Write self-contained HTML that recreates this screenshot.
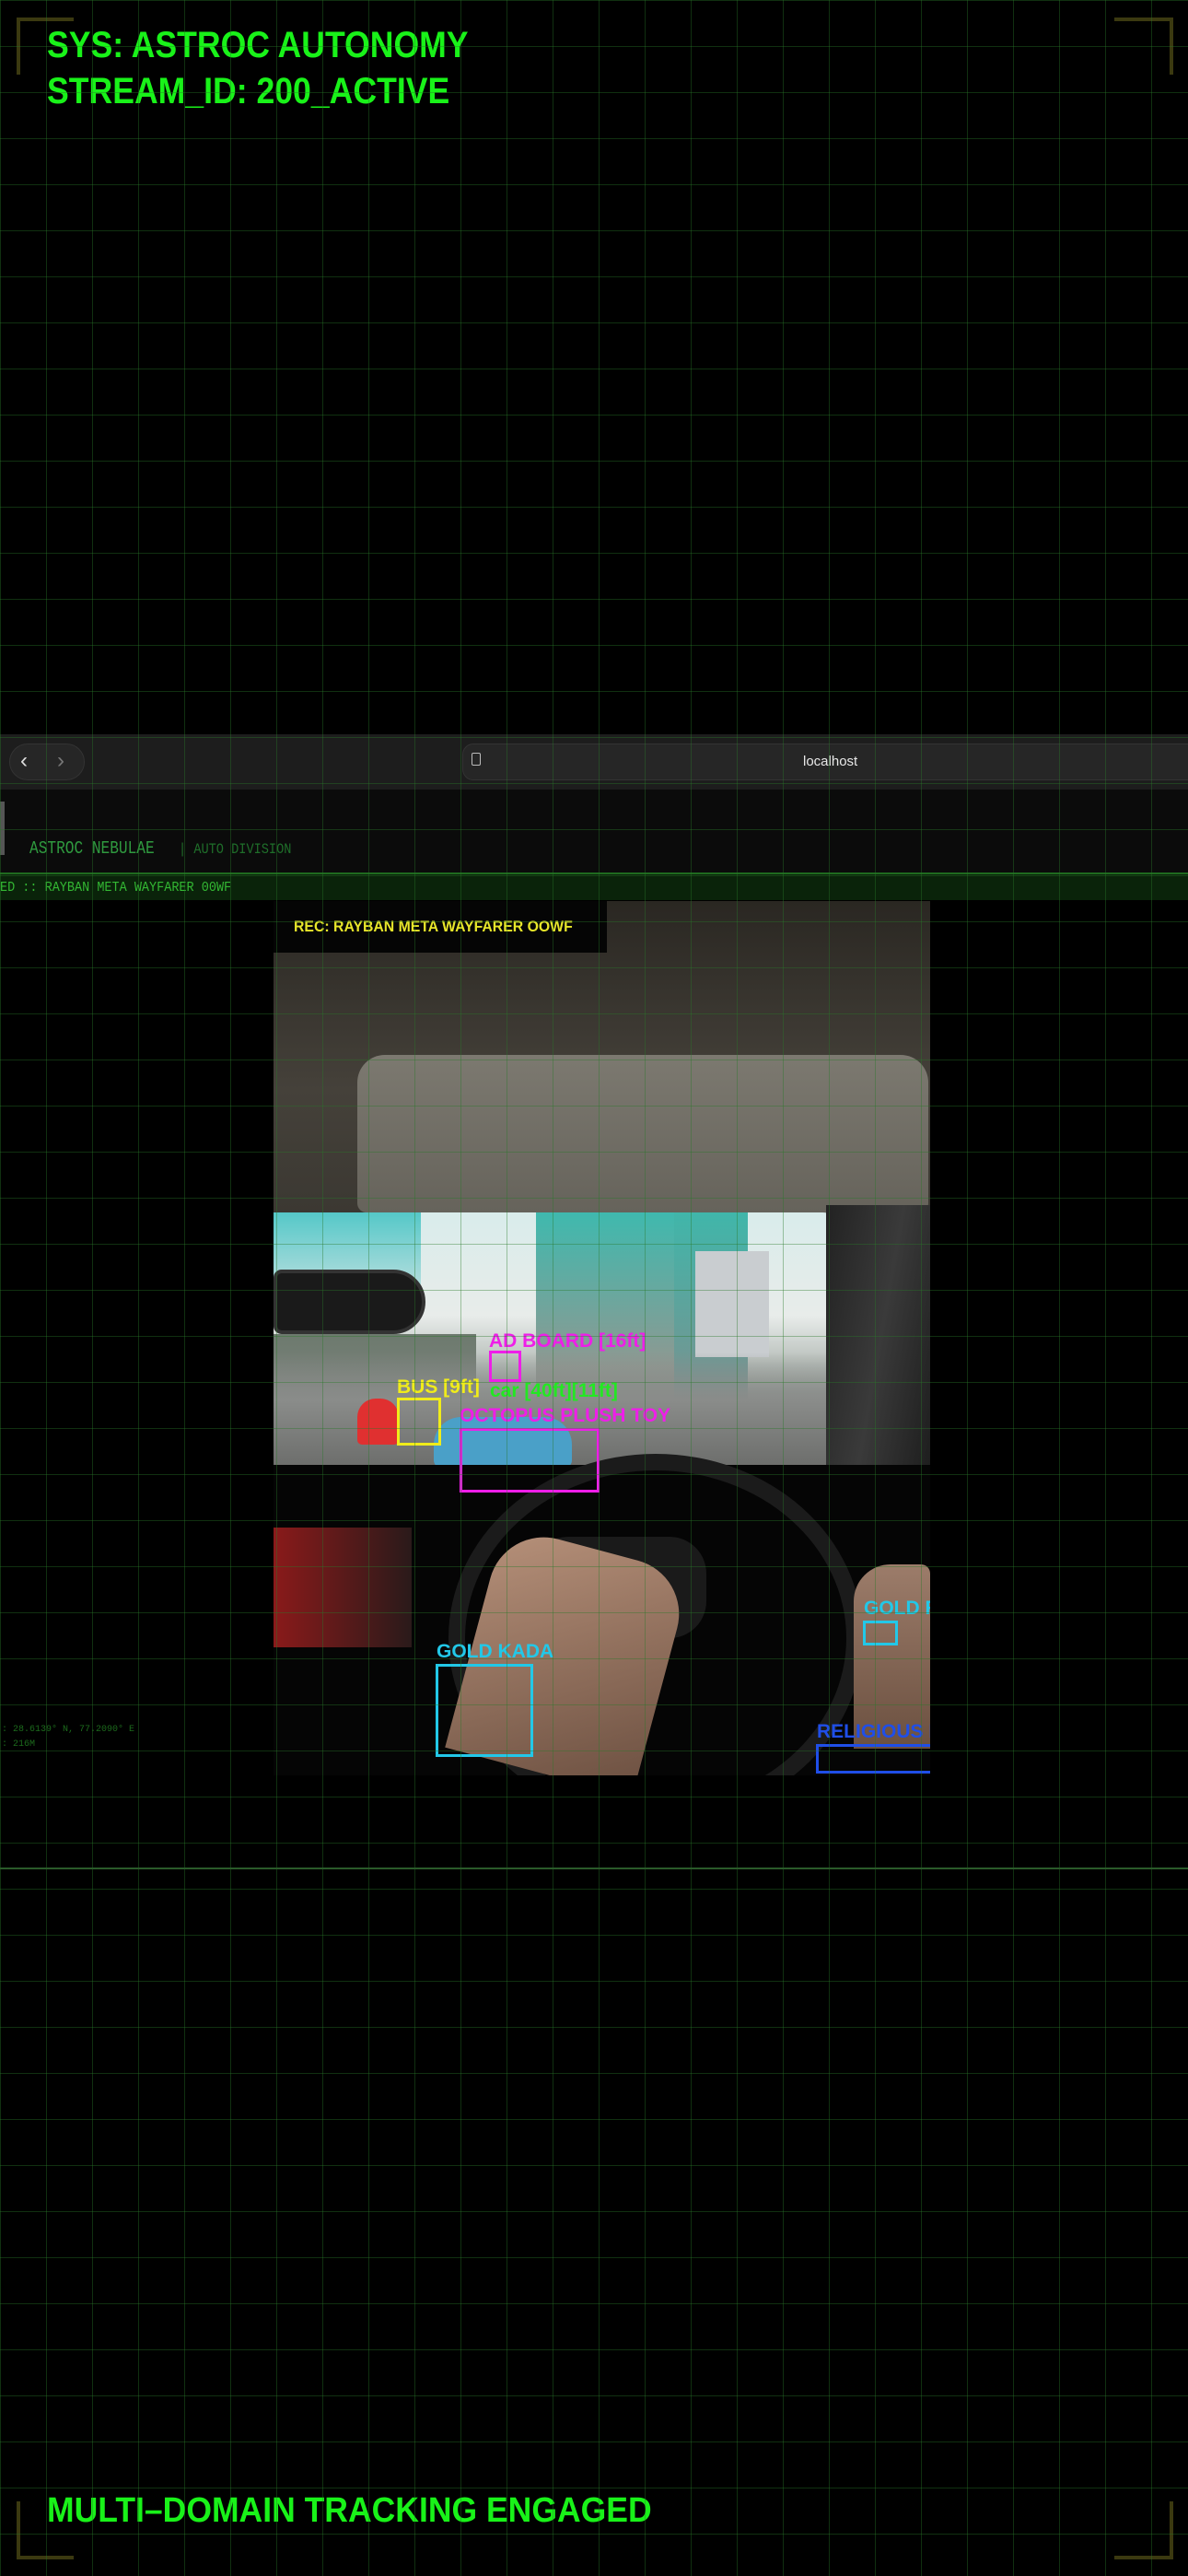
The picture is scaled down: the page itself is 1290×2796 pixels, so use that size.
<!DOCTYPE html>
<html><head><meta charset="utf-8"><style>
*{margin:0;padding:0;box-sizing:border-box}
body{width:1290px;height:2796px;background:#000;position:relative;overflow:hidden;font-family:"Liberation Sans",sans-serif}
.a{position:absolute}
.grid{position:absolute;left:0;top:0;width:1290px;height:2796px;z-index:50;pointer-events:none;
background-image:linear-gradient(to right,rgba(40,120,40,.4) 1px,transparent 1px),linear-gradient(to bottom,rgba(40,120,40,.4) 1px,transparent 1px);background-size:50px 50px}
.big{color:#19f219;font-weight:bold;font-size:40px;transform-origin:0 0;transform:scaleX(.89);white-space:nowrap;line-height:1}
.br{position:absolute;background:#3b3910}
.lbl{position:absolute;font-weight:bold;font-size:21px;white-space:nowrap;line-height:1;transform:scaleX(1.0);transform-origin:0 0}
.box{position:absolute;border:3px solid}
.mono{font-family:"Liberation Mono",monospace}
</style></head><body>

<div class="br" style="left:18px;top:19px;width:62px;height:4px"></div>
<div class="br" style="left:18px;top:19px;width:4px;height:62px"></div>
<div class="br" style="left:1210px;top:19px;width:64px;height:4px"></div>
<div class="br" style="left:1270px;top:19px;width:4px;height:62px"></div>
<div class="br" style="left:18px;top:2774px;width:62px;height:4px"></div>
<div class="br" style="left:18px;top:2715px;width:4px;height:63px"></div>
<div class="br" style="left:1210px;top:2774px;width:64px;height:4px"></div>
<div class="br" style="left:1270px;top:2715px;width:4px;height:63px"></div>

<div class="a big" style="left:51px;top:29px">SYS: ASTROC AUTONOMY</div>
<div class="a big" style="left:51px;top:79px">STREAM_ID: 200_ACTIVE</div>
<div class="a big" style="left:51px;top:2706px;font-size:38px;transform:scaleX(.935)">MULTI–DOMAIN TRACKING ENGAGED</div>

<!-- browser bar -->
<div class="a" style="left:0;top:797px;width:1290px;height:60px;background:#1d1d1d"></div>
<div class="a" style="left:10px;top:807px;width:82px;height:40px;border-radius:20px;background:#262626;border:1px solid #333"></div>
<div class="a" style="left:22px;top:812px;color:#ddd;font-size:24px">&#8249;</div>
<div class="a" style="left:62px;top:812px;color:#777;font-size:24px">&#8250;</div>
<div class="a" style="left:502px;top:807px;width:800px;height:40px;border-radius:12px;background:#262626;border:1px solid #333"></div>
<div class="a" style="left:512px;top:817px;width:10px;height:14px;border:1.5px solid #bbb;border-radius:2px"></div>
<div class="a" style="left:872px;top:818px;color:#e8e8e8;font-size:15px">localhost</div>

<!-- header -->
<div class="a" style="left:0;top:857px;width:1290px;height:91px;background:#0b0b0b"></div>
<div class="a" style="left:0;top:870px;width:5px;height:58px;background:#555"></div>
<div class="a mono" style="left:32px;top:910px;color:#2f9a3f;font-size:19px;transform:scaleX(.85);transform-origin:0 0;white-space:nowrap">ASTROC NEBULAE</div>
<div class="a mono" style="left:194px;top:913px;color:#1f6f2a;font-size:16px;transform:scaleX(.85);transform-origin:0 0;white-space:nowrap">| AUTO DIVISION</div>
<div class="a" style="left:0;top:947px;width:1290px;height:30px;background:#0a230a;border-top:2px solid #1f6a1f"></div>
<div class="a mono" style="left:0;top:955px;color:#33b833;font-size:15px;transform:scaleX(.9);transform-origin:0 0;white-space:nowrap">ED :: RAYBAN META WAYFARER 00WF</div>

<div class="a mono" style="left:2px;top:1870px;color:#1c6a1c;font-size:10px;line-height:16px">: 28.6139° N, 77.2090° E<br>: 216M</div>

<!-- video -->
<div class="a" style="left:297px;top:978px;width:713px;height:949px;overflow:hidden;background:#040404">
  <div class="a" style="left:0;top:0;width:713px;height:340px;background:linear-gradient(#2a2722,#45413a 60%,#3b3832)"></div>
  <div class="a" style="left:91px;top:167px;width:620px;height:171px;border-radius:30px 30px 10px 10px;background:linear-gradient(#7c7970,#66635b)"></div>
  <div class="a" style="left:0;top:338px;width:626px;height:280px;border-radius:0 30px 0 0;background:linear-gradient(#d9eceb,#e8ecea 40%,#9aa39d 70%,#6b6e6b)"></div>
  <div class="a" style="left:0;top:338px;width:160px;height:90px;background:linear-gradient(#55c8c8,#bfe0e0)"></div>
  <div class="a" style="left:285px;top:338px;width:150px;height:280px;background:linear-gradient(#3fb9ae,#8f9891 60%,#7a7f7a)"></div>
  <div class="a" style="left:435px;top:338px;width:80px;height:250px;background:linear-gradient(#40b6aa,#888)"></div>
  <div class="a" style="left:458px;top:380px;width:80px;height:115px;background:#c9cdd0"></div>
  <div class="a" style="left:0;top:470px;width:220px;height:130px;background:linear-gradient(#6d7a6e,#888)"></div>
  <div class="a" style="left:0;top:490px;width:626px;height:130px;background:linear-gradient(rgba(120,125,120,0),#8a8c8a 40%,#6a6b69)"></div>
  <div class="a" style="left:0;top:400px;width:165px;height:70px;border-radius:10px 40px 40px 10px;background:#1a1a1a;border:4px solid #333"></div>
  <div class="a" style="left:91px;top:540px;width:45px;height:50px;background:#e03030;border-radius:20px 20px 5px 5px"></div>
  <div class="a" style="left:174px;top:560px;width:150px;height:55px;border-radius:30px 30px 8px 8px;background:#4aa0c8"></div>
  <div class="a" style="left:600px;top:330px;width:113px;height:320px;background:linear-gradient(100deg,#222 0%,#3a3a3a 50%,#1c1c1c)"></div>
  <div class="a" style="left:0;top:612px;width:713px;height:337px;background:#050505"></div>
  <div class="a" style="left:0;top:680px;width:150px;height:130px;background:linear-gradient(90deg,#8a1a1a,#2a1a1a)"></div>
  <div class="a" style="left:190px;top:600px;width:450px;height:400px;border-radius:50%;border:18px solid #1b1b1b"></div>
  <div class="a" style="left:280px;top:690px;width:190px;height:110px;border-radius:40px;background:#1a1a1a"></div>
  <div class="a" style="left:215px;top:700px;width:210px;height:250px;background:linear-gradient(150deg,#b7917a,#6b4f40);border-radius:60px 60px 0 0;transform:rotate(15deg)"></div>
  <div class="a" style="left:630px;top:720px;width:83px;height:200px;background:linear-gradient(#9c7c6a,#6b5040);border-radius:40px 10px 0 0"></div>
  <div class="a" style="left:0;top:0;width:362px;height:56px;background:#050505"></div>
  <div class="a" style="left:22px;top:18px;color:#e8e62a;font-size:17px;font-weight:bold;white-space:nowrap;transform:scaleX(.93);transform-origin:0 0">REC: RAYBAN META WAYFARER OOWF</div>
  <div class="lbl" style="left:234px;top:467px;color:#ee1ee8">AD BOARD [16ft]</div>
  <div class="box" style="left:234px;top:488px;width:35px;height:34px;border-color:#ee1ee8"></div>
  <div class="lbl" style="left:134px;top:517px;color:#f0ec1a">BUS [9ft]</div>
  <div class="box" style="left:134px;top:539px;width:48px;height:52px;border-color:#f0ec1a"></div>
  <div class="lbl" style="left:235px;top:521px;color:#22e822">car [40ft][11ft]</div>
  <div class="lbl" style="left:202px;top:548px;color:#ee1ee8">OCTOPUS PLUSH TOY</div>
  <div class="box" style="left:202px;top:572px;width:152px;height:70px;border-color:#ee1ee8"></div>
  <div class="lbl" style="left:177px;top:804px;color:#22c8e8">GOLD KADA</div>
  <div class="box" style="left:176px;top:828px;width:106px;height:101px;border-color:#22c8e8"></div>
  <div class="lbl" style="left:641px;top:757px;color:#22c8e8">GOLD R</div>
  <div class="box" style="left:640px;top:781px;width:38px;height:27px;border-color:#22c8e8"></div>
  <div class="lbl" style="left:590px;top:891px;color:#1f4ee8">RELIGIOUS K</div>
  <div class="box" style="left:589px;top:915px;width:130px;height:32px;border-color:#1f4ee8"></div>
</div>

<div class="a" style="left:0;top:2027px;width:1290px;height:2px;background:#2a5a2a;z-index:51"></div>
<div class="grid"></div>
</body></html>
